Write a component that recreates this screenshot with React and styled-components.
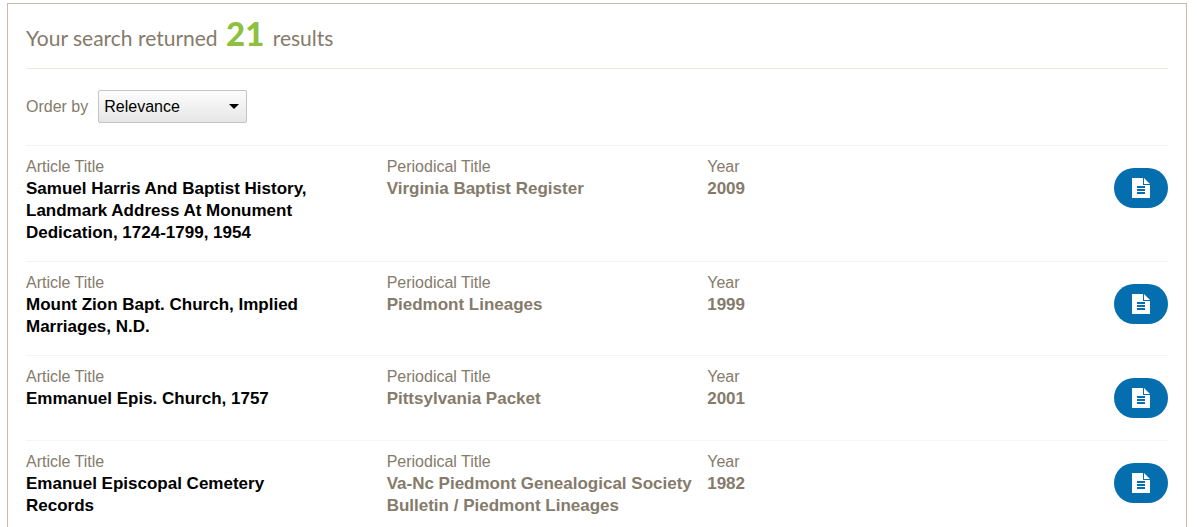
import styled, { createGlobalStyle } from "styled-components";

const GlobalStyle = createGlobalStyle`
  body {
    margin: 3px 10px 0 7px;
    background: #fff;
    color: #857b6b;
    font-family: "Liberation Sans", Arial, sans-serif;
    font-size: 16px;
    line-height: 22px;
  }
`;

const Panel = styled.main`
  border: 1px solid #c8bda8;
  padding: 0 18px;
`;

const Heading = styled.h1`
  margin: 0;
  padding: 13px 0 10px;
  border-bottom: 1px solid #ece8df;
  font-family: Lato, sans-serif;
  font-size: 21px;
  font-weight: 400;
  line-height: 40px;
`;

const Count = styled.strong`
  margin: 0 3px;
  color: #8dc03f;
  font-size: 33px;
  font-weight: 900;
  line-height: 1;
`;

const OrderBar = styled.div`
  display: flex;
  align-items: center;
  gap: 10px;
  padding: 21px 0 22px;
`;

const SelectWrap = styled.div`
  position: relative;
`;

const Select = styled.select`
  appearance: none;
  display: block;
  width: 149px;
  height: 33px;
  padding: 0 24px 0 5px;
  border: 1px solid #c4c4c4;
  border-radius: 2px;
  background: linear-gradient(#fdfdfd, #e6e6e6);
  color: #000;
  font: inherit;
`;

const Arrow = styled.svg`
  position: absolute;
  top: 14px;
  right: 8px;
  pointer-events: none;
`;

const Results = styled.ul`
  margin: 0;
  padding: 0;
  list-style: none;
`;

const Row = styled.li`
  display: grid;
  grid-template-columns: 18fr 16fr 16fr 7fr;
  border-top: 1px solid #f4f4f4;
`;

const Cell = styled.div`
  padding: 10px ${({ $wide }) => ($wide ? "60px" : "0")} 17px 0;
`;

const Label = styled.div`
  font-size: 16px;
`;

const Value = styled.div`
  color: ${({ $dark }) => ($dark ? "#000" : "inherit")};
  font-size: 17px;
  font-weight: 700;
`;

const ViewButton = styled.button`
  display: flex;
  align-items: center;
  justify-content: center;
  justify-self: end;
  width: 54px;
  height: 40px;
  margin: 22px 0;
  padding: 0;
  border: 0;
  border-radius: 20px;
  background: #046eae;
  cursor: pointer;
`;

const results = [
  {
    title:
      "Samuel Harris And Baptist History, Landmark Address At Monument Dedication, 1724-1799, 1954",
    periodical: "Virginia Baptist Register",
    year: 2009,
  },
  {
    title: "Mount Zion Bapt. Church, Implied Marriages, N.D.",
    periodical: "Piedmont Lineages",
    year: 1999,
  },
  {
    title: "Emmanuel Epis. Church, 1757",
    periodical: "Pittsylvania Packet",
    year: 2001,
  },
  {
    title: "Emanuel Episcopal Cemetery Records",
    periodical:
      "Va-Nc Piedmont Genealogical Society Bulletin / Piedmont Lineages",
    year: 1982,
  },
];

const DocumentIcon = () => (
  <svg width="18" height="20" viewBox="0 0 18 20" aria-hidden="true">
    <path fill="#fff" d="M0 0h11v7h7v13H0z" />
    <path fill="#fff" d="M12 0l6 6h-6z" />
    <path fill="#046eae" d="M5 8h8v2H5zM5 11h8v2H5zM5 14h8v2H5z" />
  </svg>
);

const Result = ({ title, periodical, year }) => {
  return (
    <Row>
      <Cell $wide>
        <Label>Article Title</Label>
        <Value $dark>{title}</Value>
      </Cell>
      <Cell>
        <Label>Periodical Title</Label>
        <Value>{periodical}</Value>
      </Cell>
      <Cell>
        <Label>Year</Label>
        <Value>{year}</Value>
      </Cell>
      <ViewButton type="button" aria-label="View record">
        <DocumentIcon />
      </ViewButton>
    </Row>
  );
};

const App = () => {
  return (
    <>
      <GlobalStyle />
      <Panel>
        <Heading>
          Your search returned <Count>21</Count> results
        </Heading>
        <OrderBar>
          <label htmlFor="order">Order by</label>
          <SelectWrap>
            <Select id="order">
              <option>Relevance</option>
            </Select>
            <Arrow width="10" height="5" viewBox="0 0 10 5" aria-hidden="true">
              <path d="M0 0h10L5 5z" />
            </Arrow>
          </SelectWrap>
        </OrderBar>
        <Results>
          {results.map((item) => (
            <Result key={item.title} {...item} />
          ))}
        </Results>
      </Panel>
    </>
  );
};

export default App;
